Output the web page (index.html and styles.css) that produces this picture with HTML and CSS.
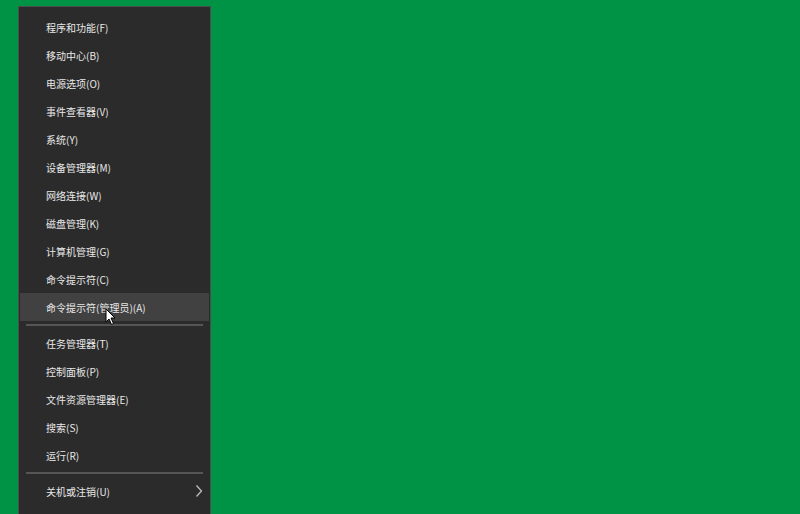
FILE: index.html
```html
<!DOCTYPE html>
<html lang="zh-CN">
<head>
  <meta charset="UTF-8" />
  <meta name="viewport" content="width=device-width, initial-scale=1" />
  <title>Win+X 菜单</title>
  <link rel="stylesheet" href="styles.css">
</head>
<body>

  <div class="winx-menu">
    <div class="menu-item">程序和功能(F)</div>
    <div class="menu-item">移动中心(B)</div>
    <div class="menu-item">电源选项(O)</div>
    <div class="menu-item">事件查看器(V)</div>
    <div class="menu-item">系统(Y)</div>
    <div class="menu-item">设备管理器(M)</div>
    <div class="menu-item">网络连接(W)</div>
    <div class="menu-item">磁盘管理(K)</div>
    <div class="menu-item">计算机管理(G)</div>
    <div class="menu-item">命令提示符(C)</div>
    <div class="menu-item hover">
      命令提示符(管理员)(A)
      <!-- 鼠标指针 -->
      <svg class="cursor" width="12" height="18" viewBox="0 0 12 18">
        <path d="M1 1 L1 14 L4 11 L6.5 16.5 L8.5 15.5 L6 10 L10 10 Z" fill="#ffffff" stroke="#000000" stroke-width="1" stroke-linejoin="round"/>
      </svg>
    </div>

    <div class="separator"></div>

    <div class="menu-item">任务管理器(T)</div>
    <div class="menu-item">控制面板(P)</div>
    <div class="menu-item">文件资源管理器(E)</div>
    <div class="menu-item">搜索(S)</div>
    <div class="menu-item">运行(R)</div>

    <div class="separator"></div>

    <div class="menu-item has-sub">
      关机或注销(U)
      <svg class="chevron" width="8" height="14" viewBox="0 0 8 14">
        <path d="M1.5 1.5 L6.5 7 L1.5 12.5" fill="none" stroke="#bdbdbd" stroke-width="1.3"/>
      </svg>
    </div>
  </div>

</body>
</html>
```

FILE: styles.css
```css
/* Reset & base */
* {
  box-sizing: border-box;
}
html, body {
  height: 100%;
}
body {
  margin: 0;
  background-color: #009245;
  font-family: "Noto Sans CJK SC", "Microsoft YaHei", "Noto Sans", sans-serif;
  overflow: hidden;
}
.winx-menu {
  width: 193px;
  margin: 6px 0 0 18px;
  padding: 6px 0 0;
  background-color: #2b2b2b;
  border: 1px solid #4d4d4d;
  border-bottom: none;
  min-height: 600px;
}
.menu-item {
  position: relative;
  height: 28px;
  margin: 0 1px;
  padding-left: 26px;
  display: flex;
  align-items: center;
  font-size: 10px;
  color: #e8e8e8;
  white-space: nowrap;
}
.menu-item.hover {
  background-color: #414141;
}
.separator {
  height: 8px;
  padding: 3px 7px;
}
.separator::before {
  content: "";
  display: block;
  height: 2px;
  background-color: #555555;
}
.chevron {
  position: absolute;
  right: 6px;
  top: 7px;
}
/* 鼠标指针 */
.cursor {
  position: absolute;
  left: 85px;
  top: 15px;
}
```
